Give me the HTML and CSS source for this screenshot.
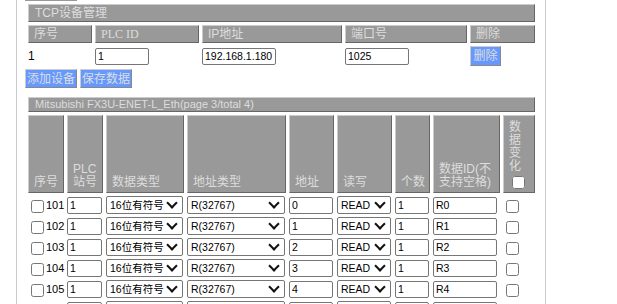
FILE: index.html
```html
<!DOCTYPE html>
<html>

<head>
  <meta charset="utf-8">
  <link rel="stylesheet" href="styles.css">
</head>

<body>
  <div class="panel">
    <div class="stub"></div>

    <table class="grid devices">
      <colgroup>
        <col class="w-no">
        <col class="w-id">
        <col class="w-ip">
        <col class="w-port">
        <col class="w-del">
      </colgroup>
      <tr>
        <th class="title" colspan="5">TCP设备管理</th>
      </tr>
      <tr class="head">
        <th>序号</th>
        <th class="serif">PLC ID</th>
        <th>IP地址</th>
        <th>端口号</th>
        <th>删除</th>
      </tr>
      <tr class="row">
        <td>1</td>
        <td><input type="text" class="field in-id" value="1"></td>
        <td><input type="text" class="field in-ip" value="192.168.1.180"></td>
        <td><input type="text" class="field in-port" value="1025"></td>
        <td><button class="btn btn-del">删除</button></td>
      </tr>
    </table>

    <div class="actions">
      <button class="btn btn-wide">添加设备</button>
      <button class="btn btn-wide">保存数据</button>
    </div>

    <table class="grid points">
      <colgroup>
        <col class="p-no">
        <col class="p-st">
        <col class="p-type">
        <col class="p-area">
        <col class="p-addr">
        <col class="p-rw">
        <col class="p-cnt">
        <col class="p-tag">
        <col class="p-chg">
      </colgroup>
      <tr>
        <th class="title small" colspan="9">Mitsubishi FX3U-ENET-L_Eth(page 3/total 4)</th>
      </tr>
      <tr class="head">
        <th>序号</th>
        <th>PLC 站号</th>
        <th>数据类型</th>
        <th>地址类型</th>
        <th>地址</th>
        <th>读写</th>
        <th>个数</th>
        <th>数据ID(不支持空格)</th>
        <th>数据变化<br><input type="checkbox" class="chk"></th>
      </tr>
      <tr class="row">
        <td><input type="checkbox" class="chk"><span class="num">101</span></td>
        <td><input type="text" class="field" value="1"></td>
        <td><span class="sel"><select class="pick"><option>16位有符号</option></select></span></td>
        <td><span class="sel"><select class="pick"><option>R(32767)</option></select></span></td>
        <td><input type="text" class="field" value="0"></td>
        <td><span class="sel"><select class="pick"><option>READ</option></select></span></td>
        <td><input type="text" class="field" value="1"></td>
        <td><input type="text" class="field in-tag" value="R0"></td>
        <td><input type="checkbox" class="chk"></td>
      </tr>
      <tr class="row">
        <td><input type="checkbox" class="chk"><span class="num">102</span></td>
        <td><input type="text" class="field" value="1"></td>
        <td><span class="sel"><select class="pick"><option>16位有符号</option></select></span></td>
        <td><span class="sel"><select class="pick"><option>R(32767)</option></select></span></td>
        <td><input type="text" class="field" value="1"></td>
        <td><span class="sel"><select class="pick"><option>READ</option></select></span></td>
        <td><input type="text" class="field" value="1"></td>
        <td><input type="text" class="field in-tag" value="R1"></td>
        <td><input type="checkbox" class="chk"></td>
      </tr>
      <tr class="row">
        <td><input type="checkbox" class="chk"><span class="num">103</span></td>
        <td><input type="text" class="field" value="1"></td>
        <td><span class="sel"><select class="pick"><option>16位有符号</option></select></span></td>
        <td><span class="sel"><select class="pick"><option>R(32767)</option></select></span></td>
        <td><input type="text" class="field" value="2"></td>
        <td><span class="sel"><select class="pick"><option>READ</option></select></span></td>
        <td><input type="text" class="field" value="1"></td>
        <td><input type="text" class="field in-tag" value="R2"></td>
        <td><input type="checkbox" class="chk"></td>
      </tr>
      <tr class="row">
        <td><input type="checkbox" class="chk"><span class="num">104</span></td>
        <td><input type="text" class="field" value="1"></td>
        <td><span class="sel"><select class="pick"><option>16位有符号</option></select></span></td>
        <td><span class="sel"><select class="pick"><option>R(32767)</option></select></span></td>
        <td><input type="text" class="field" value="3"></td>
        <td><span class="sel"><select class="pick"><option>READ</option></select></span></td>
        <td><input type="text" class="field" value="1"></td>
        <td><input type="text" class="field in-tag" value="R3"></td>
        <td><input type="checkbox" class="chk"></td>
      </tr>
      <tr class="row">
        <td><input type="checkbox" class="chk"><span class="num">105</span></td>
        <td><input type="text" class="field" value="1"></td>
        <td><span class="sel"><select class="pick"><option>16位有符号</option></select></span></td>
        <td><span class="sel"><select class="pick"><option>R(32767)</option></select></span></td>
        <td><input type="text" class="field" value="4"></td>
        <td><span class="sel"><select class="pick"><option>READ</option></select></span></td>
        <td><input type="text" class="field" value="1"></td>
        <td><input type="text" class="field in-tag" value="R4"></td>
        <td><input type="checkbox" class="chk"></td>
      </tr>
      <tr class="row">
        <td><input type="checkbox" class="chk"><span class="num">106</span></td>
        <td><input type="text" class="field" value="1"></td>
        <td><span class="sel"><select class="pick"><option>16位有符号</option></select></span></td>
        <td><span class="sel"><select class="pick"><option>R(32767)</option></select></span></td>
        <td><input type="text" class="field" value="5"></td>
        <td><span class="sel"><select class="pick"><option>READ</option></select></span></td>
        <td><input type="text" class="field" value="1"></td>
        <td><input type="text" class="field in-tag" value="R5"></td>
        <td><input type="checkbox" class="chk"></td>
      </tr>
    </table>
  </div>
</body>

</html>
```

FILE: styles.css
```css
* {
  box-sizing: border-box;
}

html,
body {
  margin: 0;
  overflow: hidden;
}

body {
  background-color: #fff;
  color: #000;
  font: 12px/14px "Liberation Sans", "Noto Sans CJK SC", sans-serif;
}

.panel {
  width: 530px;
  min-height: 304px;
  margin-left: 16px;
  padding: 0 7px 0 8px;
  border-left: 1px solid #ccc;
  border-right: 1px solid #ccc;
}

.stub {
  width: 52px;
  height: 1px;
  background-color: #999;
}

/* tables */
.grid {
  width: 513px;
  table-layout: fixed;
  border-collapse: separate;
  border-spacing: 3px;
}

.grid th {
  background-color: #999;
  color: #ddd;
  font-weight: normal;
  text-align: left;
  padding: 0 3px 0 5px;
  border: 1px solid;
  border-color: #ccc #666 #666 #ccc;
}

.grid td {
  padding: 0;
  vertical-align: middle;
  white-space: nowrap;
}

.grid .title {
  height: 18px;
  padding-left: 6px;
}

.grid .title.small {
  height: 15px;
  font-size: 11px;
  line-height: 13px;
}

.serif {
  font-family: "Liberation Serif", serif;
}

.devices .head th {
  height: 18px;
}

.devices .row td {
  height: 20px;
}

.w-no { width: 64px; }
.w-id { width: 104px; }
.w-ip { width: 140px; }
.w-port { width: 122px; }
.w-del { width: 65px; }

.points .head th {
  height: 78px;
  vertical-align: bottom;
  line-height: 13px;
  padding-bottom: 3px;
}

.points .row td {
  height: 18px;
}

.p-no { width: 36px; }
.p-st { width: 36px; }
.p-type { width: 78px; }
.p-area { width: 99px; }
.p-addr { width: 45px; }
.p-rw { width: 55px; }
.p-cnt { width: 35px; }
.p-tag { width: 67px; }
.p-chg { width: 32px; }

/* form controls */
.field {
  display: block;
  width: calc(100% - 1px);
  height: 17px;
  padding: 0 2px;
  border: 1px solid #767676;
  border-radius: 2px;
  background-color: #fff;
  color: #000;
  font: 10.5px/15px "Liberation Sans", "Noto Sans CJK SC", sans-serif;
}

.in-id { width: 54px; }
.in-ip { width: 74px; }
.in-port { width: 64px; }
.in-tag { width: 64px; }

.sel {
  position: relative;
  display: block;
  width: calc(100% - 1px);
}

/* chevron drawn over the select */
.sel::after {
  content: '';
  position: absolute;
  right: 7px;
  top: 3px;
  width: 6px;
  height: 6px;
  border-right: 2px solid #111;
  border-bottom: 2px solid #111;
  transform: rotate(45deg);
  pointer-events: none;
}

.pick {
  display: block;
  width: 100%;
  height: 18px;
  padding: 0 16px 0 3px;
  border: 1px solid #767676;
  border-radius: 2px;
  background-color: #fff;
  color: #000;
  font: 10.5px "Liberation Sans", "Noto Sans CJK SC", sans-serif;
  appearance: none;
  -webkit-appearance: none;
}

.chk {
  width: 13px;
  height: 13px;
  margin: 3px 2px 0 3px;
  vertical-align: top;
}

.num {
  font-size: 11px;
  line-height: 17px;
}

.btn {
  background-color: #6699ff;
  color: #ddd;
  border: 1px solid;
  border-color: #ccc #888 #888 #ccc;
  padding: 0;
  font: 12px/16px "Liberation Sans", "Noto Sans CJK SC", sans-serif;
  cursor: pointer;
}

.btn-del {
  width: 31px;
  height: 20px;
}

.actions {
  display: flex;
  gap: 3px;
  padding-bottom: 6px;
}

.btn-wide {
  width: 52px;
  height: 19px;
}
```
